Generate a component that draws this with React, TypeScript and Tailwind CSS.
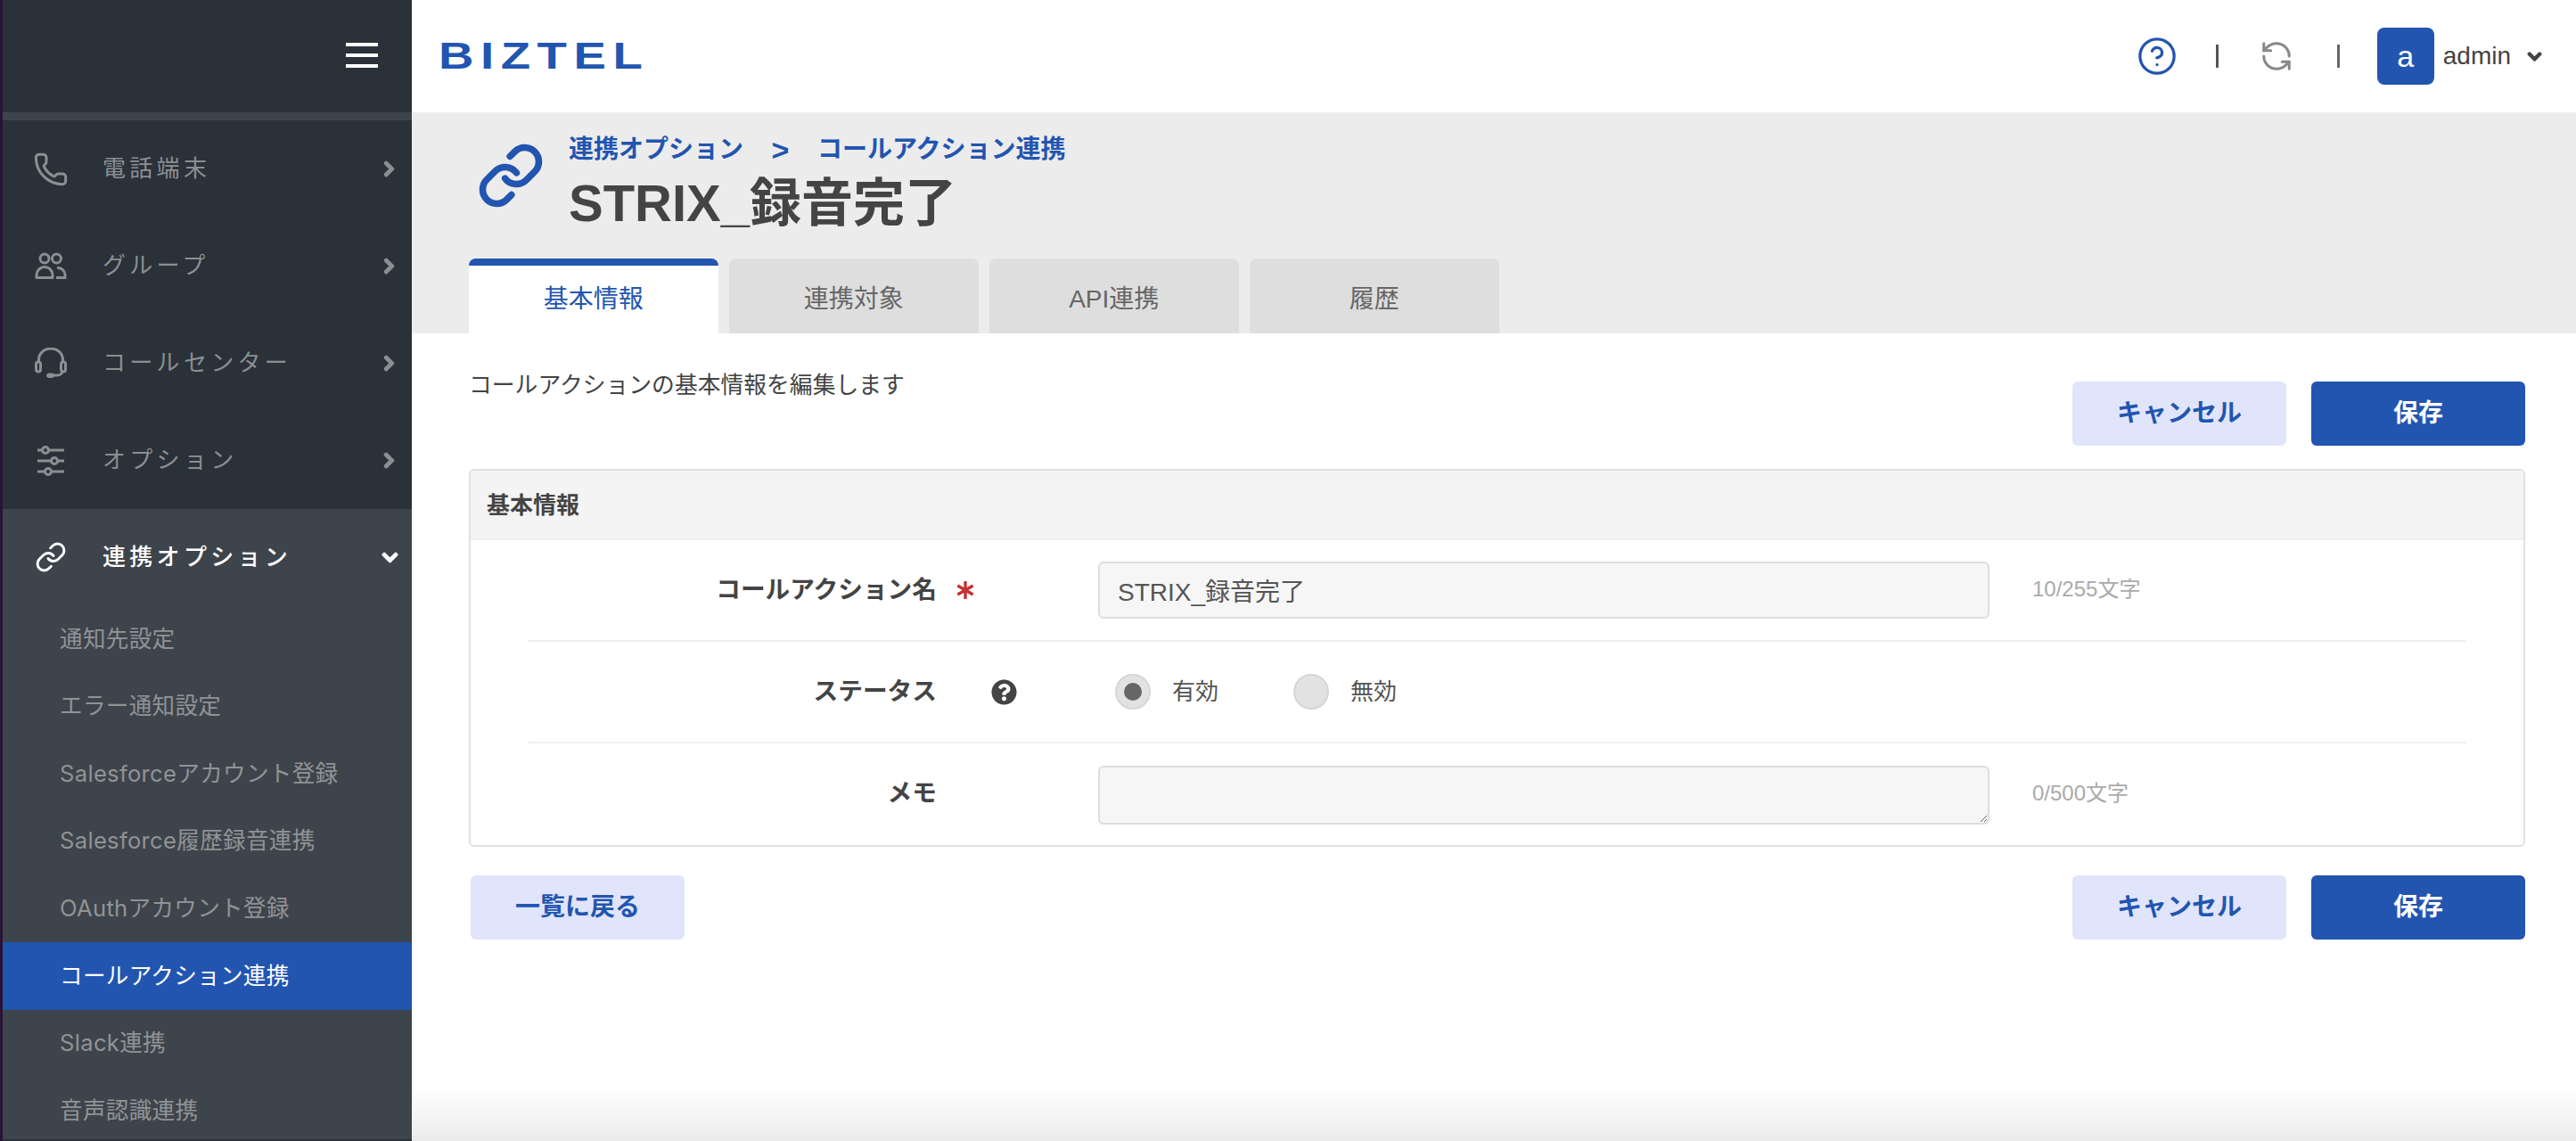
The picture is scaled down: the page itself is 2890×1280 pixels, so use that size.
import { CircleHelp, Link, Phone, RefreshCcw } from "lucide-react";
import { FaChevronDown, FaChevronRight, FaQuestionCircle } from "react-icons/fa";

const GroupIcon = () => (
  <svg width="36" height="32" viewBox="0 0 36 32" fill="none" stroke="currentColor" strokeWidth="3">
    <circle cx="11" cy="7" r="5" />
    <circle cx="24.5" cy="7" r="5" />
    <path d="M2 28.5v-3a9 9 0 0 1 18 0v3z" strokeLinejoin="round" />
    <path d="M25 17.5a8 8 0 0 1 9 7.5v3.5h-10" />
  </svg>
);

const HeadsetIcon = () => (
  <svg width="36" height="36" viewBox="0 0 36 36" fill="none" stroke="currentColor" strokeWidth="3">
    <path d="M4.5 17v-3.5a13.5 12.5 0 0 1 27 0V17" />
    <rect x="1.5" y="16" width="5" height="11" rx="2.5" />
    <rect x="29.5" y="16" width="5" height="11" rx="2.5" />
    <path d="M31 27q-1 4-6 4h-6" />
    <rect x="13.5" y="29" width="8" height="4.5" rx="2.2" fill="currentColor" strokeWidth="1" />
  </svg>
);

const SlidersIcon = () => (
  <svg width="32" height="34" viewBox="0 0 32 34" fill="none" stroke="currentColor" strokeWidth="3">
    <path d="M1 5h30M1 17h30M1 29h30" />
    <circle cx="10" cy="5" r="3.5" fill="#2a3139" />
    <circle cx="20" cy="17" r="3.5" fill="#2a3139" />
    <circle cx="13" cy="29" r="3.5" fill="#2a3139" />
  </svg>
);

const menu = [
  { label: "電話端末", icon: <Phone size={40} strokeWidth={1.8} /> },
  { label: "グループ", icon: <GroupIcon /> },
  { label: "コールセンター", icon: <HeadsetIcon /> },
  { label: "オプション", icon: <SlidersIcon /> },
];

const subMenu = [
  "通知先設定",
  "エラー通知設定",
  "Salesforceアカウント登録",
  "Salesforce履歴録音連携",
  "OAuthアカウント登録",
  "コールアクション連携",
  "Slack連携",
  "音声認識連携",
];

const tabs = ["基本情報", "連携対象", "API連携", "履歴"];

const Sidebar = () => (
  <aside className="flex h-[1280px] w-[462px] shrink-0 bg-[#2a3139]">
    <div className="w-[3px] shrink-0 bg-[#2b1238]" />
    <div className="flex min-w-0 flex-1 flex-col">
      <div className="flex h-[126px] flex-col items-end justify-center gap-2 pb-[2px] pr-[38px]">
        <span className="h-1 w-9 bg-white" />
        <span className="h-1 w-9 bg-white" />
        <span className="h-1 w-9 bg-white" />
      </div>
      <div className="h-[9px] bg-[#3e444b]" />

      {/* Main menu */}
      {menu.map((item) => (
        <div key={item.label} className="flex h-[109px] items-center text-[#8b8f92]">
          <div className="flex w-[112px] justify-center pr-[6px] pl-[1px]">
            <div className="flex w-[40px] justify-center">{item.icon}</div>
          </div>
          <span className="flex-1 text-[26px] tracking-[4.3px]">{item.label}</span>
          <FaChevronRight size={19} stroke="currentColor" strokeWidth={50} className="mr-[16px]" />
        </div>
      ))}

      {/* Opened group */}
      <div className="h-[707px] overflow-hidden bg-[#3e444b]">
        <div className="flex h-[108px] items-center text-white">
          <div className="flex w-[112px] justify-center pr-[6px] pl-[1px]">
            <Link size={36} strokeWidth={2} />
          </div>
          <span className="flex-1 text-[26px] font-medium tracking-[4.3px]">連携オプション</span>
          <FaChevronDown size={19} stroke="currentColor" strokeWidth={50} className="mr-[15px]" />
        </div>
        {subMenu.map((label) => (
          <div
            key={label}
            className={
              label === "コールアクション連携"
                ? "flex h-[75.6px] items-center bg-[#2255b0] pl-[64px] font-['Inter','Noto_Sans_CJK_JP',sans-serif] text-[25.6px] tracking-[0.3px] text-white"
                : "flex h-[75.6px] items-center pl-[64px] font-['Inter','Noto_Sans_CJK_JP',sans-serif] text-[25.6px] tracking-[0.3px] text-[#909396]"
            }
          >
            {label}
          </div>
        ))}
      </div>
    </div>
  </aside>
);

const TopBar = () => (
  <header className="flex h-[126px] shrink-0 items-center bg-white pr-[38px] pl-[30px]">
    <span className="origin-left scale-x-[1.3] text-[42px] leading-none font-bold tracking-[5.8px] text-[#2255b0]">
      BIZTEL
    </span>
    <div className="ml-auto flex items-center">
      <CircleHelp size={46} strokeWidth={1.7} className="text-[#2255b0]" />
      <span className="ml-[43px] h-[26px] w-[3px] bg-[#555]" />
      <RefreshCcw size={38} strokeWidth={1.9} className="ml-[46px] text-[#888]" />
      <span className="ml-[49px] h-[26px] w-[3px] bg-[#666]" />
      <div className="ml-[42px] flex h-[64px] w-[64px] items-center justify-center rounded-lg bg-[#2255b0] text-[34px] text-white">
        a
      </div>
      <span className="ml-[10px] text-[28px] text-[#444]">admin</span>
      <FaChevronDown size={17} stroke="currentColor" strokeWidth={50} className="ml-[18px] text-[#444]" />
    </div>
  </header>
);

const PageHead = () => (
  <section className="h-[248px] shrink-0 bg-[#ececec] pl-[64px]">
    <div className="flex h-[164px] items-start">
      <Link size={76} strokeWidth={2.4} className="mt-[33px] ml-[9px] text-[#2255b0]" />
      <div className="ml-[27px] pt-[20px]">
        <div className="flex h-[44px] items-center text-[28px] font-bold text-[#2255b0]">
          <span>連携オプション</span>
          <span className="mx-[31.5px] text-[34px] font-bold">&gt;</span>
          <span>コールアクション連携</span>
        </div>
        <h1 className="mt-[2px] text-[58px] leading-[72px] font-bold text-[#444]">STRIX_録音完了</h1>
      </div>
    </div>
    <nav className="flex gap-[12.5px]">
      {tabs.map((tab) => (
        <div
          key={tab}
          className={
            tab === "基本情報"
              ? "flex h-[84px] w-[279.5px] items-center justify-center rounded-t-lg border-t-8 border-[#2255b0] bg-white text-[28px] text-[#2255b0]"
              : "flex h-[84px] w-[279.5px] items-center justify-center rounded-t-lg border-t-8 border-transparent bg-[#dedede] text-[28px] text-[#666]"
          }
        >
          {tab}
        </div>
      ))}
    </nav>
  </section>
);

const Buttons = () => (
  <div className="ml-auto flex gap-[28px]">
    <button className="h-[72px] w-[240px] rounded-md bg-[#e0e5fb] text-[28px] font-bold text-[#2255b0]">キャンセル</button>
    <button className="h-[72px] w-[240px] rounded-md bg-[#2255b0] text-[28px] font-bold text-white">保存</button>
  </div>
);

const Row = ({ label, side, children, last }: { label: string; side?: React.ReactNode; children: React.ReactNode; last?: boolean }) => (
  <div className={last ? "mx-[64px] flex h-[115px] items-center" : "mx-[64px] flex h-[114px] items-center border-b-2 border-[#efefef]"}>
    <div className={last ? "-mt-[4px] w-[459px] text-right text-[27.7px] font-bold text-[#444]" : "w-[459px] text-right text-[27.7px] font-bold text-[#444]"}>
      {label}
    </div>
    <div className="flex w-[181px] items-center">{side}</div>
    {children}
  </div>
);

const Radio = ({ label, on }: { label: string; on?: boolean }) => (
  <label className="flex items-center">
    <span className="flex h-[40px] w-[40px] items-center justify-center rounded-full border-2 border-[#d6d6d6] bg-[#e2e2e2]">
      {on && <span className="h-[20px] w-[20px] rounded-full bg-[#666]" />}
    </span>
    <span className="ml-[24px] text-[26px] text-[#555]">{label}</span>
  </label>
);

const Panel = () => (
  <div className="mt-[26px] h-[424px] overflow-hidden rounded-md border-2 border-[#e0e0e0]">
    <div className="flex h-[78px] items-center border-b-2 border-[#efefef] bg-[#f4f4f4] pt-[2px] pl-[18px] text-[26px] font-bold text-[#444]">
      基本情報
    </div>
    <Row
      label="コールアクション名"
      side={
        <svg width="20" height="20" viewBox="6 6 12 12" fill="none" stroke="#c53030" strokeWidth="2" className="ml-[22px]">
          <path d="M12 6v12M17.196 9 6.804 15M6.804 9l10.392 6" />
        </svg>
      }
    >
      <input
        readOnly
        value="STRIX_録音完了"
        className="h-[64px] w-[1000px] rounded-md border-2 border-[#dddddd] bg-[#f6f6f6] px-[20px] text-[28px] text-[#555]"
      />
      <span className="-mt-[3px] ml-[48px] text-[24px] text-[#aaa]">10/255文字</span>
    </Row>
    <Row label="ステータス" side={<FaQuestionCircle size={29} className="ml-[61px] text-[#444]" />}>
      <div className="flex gap-[84px] pl-[19px]">
        <Radio label="有効" on />
        <Radio label="無効" />
      </div>
    </Row>
    <Row label="メモ" last>
      <textarea
        readOnly
        className="block h-[66px] w-[1000px] resize-y rounded-md border-2 border-[#dddddd] bg-[#f6f6f6] px-[20px] text-[28px] text-[#555]"
      />
      <span className="-mt-[4px] ml-[48px] text-[24px] text-[#aaa]">0/500文字</span>
    </Row>
  </div>
);

export default function App() {
  return (
    <div className="flex h-[1280px] w-[2890px] overflow-hidden bg-white font-['Liberation_Sans','Noto_Sans_CJK_JP',sans-serif]">
      <Sidebar />
      <main className="flex min-w-0 flex-1 flex-col">
        <TopBar />
        <PageHead />
        <div className="pr-[57px] pl-[64px]">
          <div className="flex h-[126px] pt-[54px]">
            <p className="-mt-[15px] text-[25.8px] leading-[38px] text-[#444]">コールアクションの基本情報を編集します</p>
            <Buttons />
          </div>
          <Panel />
          <div className="mt-[32px] flex">
            <button className="ml-[2px] h-[72px] w-[240px] rounded-md bg-[#e0e5fb] text-[28px] font-bold text-[#2255b0]">一覧に戻る</button>
            <Buttons />
          </div>
        </div>
        <div className="mt-auto h-[60px] bg-linear-to-b from-white to-[#ebebeb]" />
      </main>
    </div>
  );
}
